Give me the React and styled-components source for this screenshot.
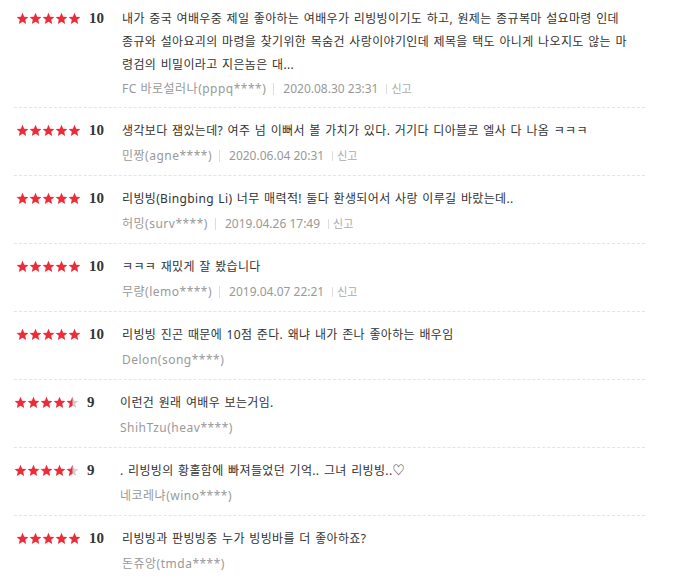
import React from 'react';
import styled, { createGlobalStyle } from 'styled-components';

const GlobalStyle = createGlobalStyle`
  body {
    margin: 0;
    background: #fff;
    font-family: "Noto Sans", "Noto Sans CJK KR", sans-serif;
  }
`;

const reviews = [
  {
    score: 10,
    text: '내가 중국 여배우중 제일 좋아하는 여배우가 리빙빙이기도 하고, 원제는 종규복마 설요마령 인데 종규와 설아요괴의 마령을 찾기위한 목숨건 사랑이야기인데 제목을 택도 아니게 나오지도 않는 마령검의 비밀이라고 지은놈은 대...',
    user: 'FC 바로설러나(pppq****)',
    date: '2020.08.30 23:31',
  },
  {
    score: 10,
    text: '생각보다 잼있는데? 여주 넘 이뻐서 볼 가치가 있다. 거기다 디아블로 엘사 다 나옴 ㅋㅋㅋ',
    user: '민짱(agne****)',
    date: '2020.06.04 20:31',
  },
  {
    score: 10,
    text: '리빙빙(Bingbing Li) 너무 매력적! 둘다 환생되어서 사랑 이루길 바랐는데..',
    user: '허밍(surv****)',
    date: '2019.04.26 17:49',
  },
  {
    score: 10,
    text: 'ㅋㅋㅋ 재밌게 잘 봤습니다',
    user: '무량(lemo****)',
    date: '2019.04.07 22:21',
  },
  {
    score: 10,
    text: '리빙빙 진곤 때문에 10점 준다. 왜냐 내가 존나 좋아하는 배우임',
    user: 'Delon(song****)',
  },
  {
    score: 9,
    text: '이런건 원래 여배우 보는거임.',
    user: 'ShihTzu(heav****)',
  },
  {
    score: 9,
    text: '. 리빙빙의 황홀함에 빠져들었던 기억.. 그녀 리빙빙..♡',
    user: '네코레냐(wino****)',
  },
  {
    score: 10,
    text: '리빙빙과 판빙빙중 누가 빙빙바를 더 좋아하죠?',
    user: '돈쥬앙(tmda****)',
  },
];

const List = styled.ul`
  list-style: none;
  margin: 0 0 0 14px;
  padding: 0;
  width: 631px;
`;

const Item = styled.li`
  display: flex;
  align-items: flex-start;
  padding: 11px 0 9px;
  border-top: 1px dashed #e4e4e4;

  &:first-child {
    border-top: none;
    padding-top: 7px;
    padding-bottom: 8px;
  }
`;

const Rating = styled.div`
  display: flex;
  align-items: center;
  width: 106px;
  flex-shrink: 0;
  height: 23px;
  padding-left: ${({ $narrow }) => ($narrow ? '0' : '2px')};
`;

const Stars = styled.span`
  display: flex;
  margin-right: 8px;
`;

const Score = styled.span`
  font-family: "Liberation Serif", "DejaVu Serif", serif;
  font-weight: bold;
  font-size: 15px;
  color: #333;
`;

const Body = styled.div`
  flex: 1;
  padding-right: 14px;
`;

const Text = styled.p`
  margin: 0;
  font-size: 12px;
  line-height: 23px;
  color: #333;
  letter-spacing: 0.35px;
  word-spacing: 1px;
`;

const Meta = styled.div`
  display: flex;
  align-items: center;
  margin-top: ${({ $first }) => ($first ? '3px' : '4px')};
  font-size: 12px;
  line-height: 20px;
  color: #999;
`;

const User = styled.span`
  letter-spacing: 0.5px;
`;

const Sep = styled.span`
  display: inline-block;
  width: 1px;
  height: ${({ $short }) => ($short ? '10px' : '12px')};
  background: #ddd;
  margin: 0 ${({ $short }) => ($short ? '4px' : '9px')} 0 ${({ $short }) => ($short ? '8px' : '7px')};
`;

const Date = styled.span`
  color: #999;
  font-size: 12px;
`;

const Report = styled.span`
  font-size: 11px;
  color: #aaa;
`;

const STAR = 'M12 1.5l3.1 7.2 7.8.6-5.9 5.1 1.8 7.6L12 17.9 5.2 22l1.8-7.6-5.9-5.1 7.8-.6z';

const StarIcon = ({ fill }) => (
  <svg width="13" height="13" viewBox="0 0 24 24">
    <defs>
      <clipPath id="half-left">
        <rect x="0" y="0" width="12" height="24" />
      </clipPath>
    </defs>
    <path d={STAR} fill={fill === 'full' ? '#ef2b3a' : '#cfcfcf'} />
    {fill === 'half' && <path d={STAR} fill="#ef2b3a" clipPath="url(#half-left)" />}
  </svg>
);

const StarRow = ({ score }) => {
  const items = [];
  for (let i = 0; i < 5; i += 1) {
    const v = score - i * 2;
    items.push(<StarIcon key={i} fill={v >= 2 ? 'full' : v === 1 ? 'half' : 'empty'} />);
  }
  return items;
};

const App = () => (
  <>
    <GlobalStyle />
    <List>
      {reviews.map((r, i) => {
        const narrow = r.score < 10;
        return (
          <Item key={i}>
            <Rating $narrow={narrow}>
              <Stars>
                <StarRow score={r.score} />
              </Stars>
              <Score>{r.score}</Score>
            </Rating>
            <Body>
              <Text>{r.text}</Text>
              <Meta $first={i === 0}>
                <User>{r.user}</User>
                {r.date && (
                  <>
                    <Sep />
                    <Date>{r.date}</Date>
                    <Sep $short />
                    <Report>신고</Report>
                  </>
                )}
              </Meta>
            </Body>
          </Item>
        );
      })}
    </List>
  </>
);

export default App;
